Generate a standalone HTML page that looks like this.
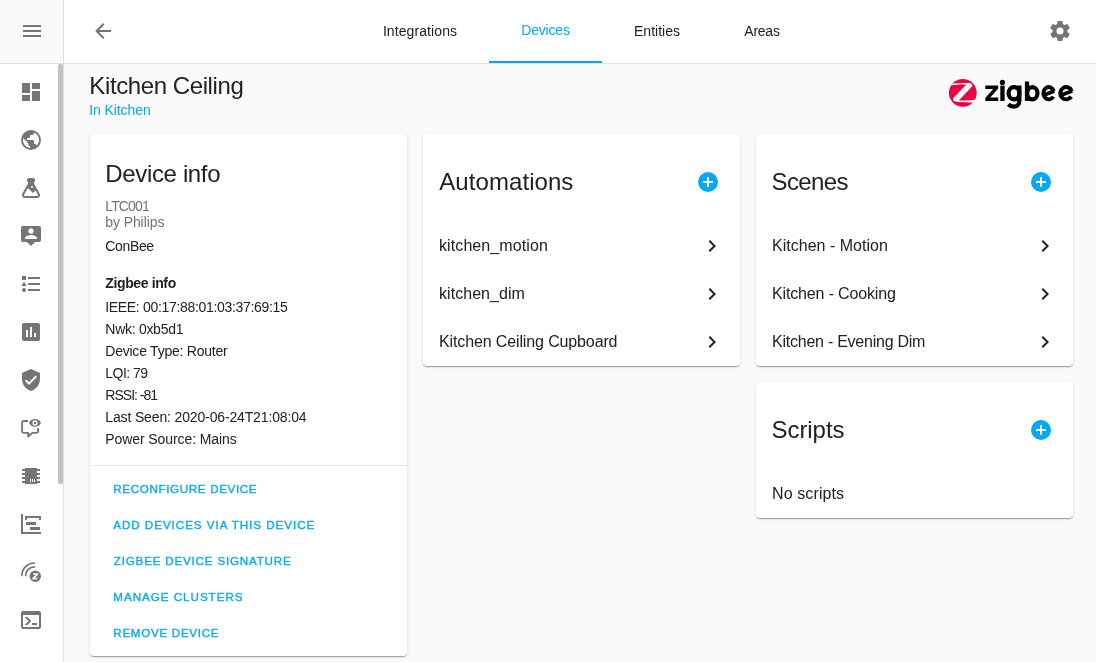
<!DOCTYPE html>
<html>
<head>
<meta charset="utf-8">
<style>
html,body{margin:0;padding:0;}
body{width:1096px;height:662px;overflow:hidden;background:#fafafa;font-family:"Liberation Sans",sans-serif;color:#212121;position:relative;}
.abs{position:absolute;}
#sidebar{left:0;top:0;width:63px;height:662px;background:#fff;border-right:1px solid #e0e0e0;}
#menu{left:0;top:0;width:63px;height:63px;background:#fafafa;border-bottom:1px solid #e0e0e0;}
#scroll{left:58px;top:64px;width:5px;height:420px;background:#c1c1c1;border-radius:2px;}
#header{left:64px;top:0;width:1032px;height:63px;background:#fff;border-bottom:1px solid #e0e0e0;}
svg.ic{position:absolute;width:24px;height:24px;fill:#757575;}
.tab{will-change:transform;position:absolute;top:0;height:64px;line-height:63px;font-size:14px;color:#212121;text-align:center;white-space:nowrap;}
.tab.act{color:#03a9f4;}
#ink{left:489px;top:61px;width:113px;height:2px;background:#03a9f4;}
.card{position:absolute;background:#fff;border-radius:4px;box-shadow:0 2px 1px -1px rgba(0,0,0,.2),0 1px 1px 0 rgba(0,0,0,.14),0 1px 3px 0 rgba(0,0,0,.12);}
.t{position:absolute;white-space:nowrap;line-height:1;}
.h1{font-size:24px;color:#212121;}
.row{font-size:16px;color:#212121;}
.info{font-size:14px;color:#212121;}
.sec{font-size:14px;color:#727272;}
.btn{font-size:11.6px;color:#03a9f4;font-weight:normal;-webkit-text-stroke:0.35px #03a9f4;}
svg.chev{position:absolute;width:24px;height:24px;fill:#212121;}
svg.plus{position:absolute;width:24px;height:24px;fill:#03a9f4;}
</style>
</head>
<body>
<div id="sidebar" class="abs"></div>
<div id="menu" class="abs"></div>
<div id="scroll" class="abs"></div>
<div id="header" class="abs"></div>

<!-- sidebar icons -->
<svg class="ic" style="left:20px;top:19px" viewBox="0 0 24 24"><path d="M3,6H21V8H3V6M3,11H21V13H3V11M3,16H21V18H3V16Z"/></svg>
<svg class="ic" style="left:19px;top:80px" viewBox="0 0 24 24"><path d="M13,3V9H21V3M13,21H21V11H13M3,21H11V15H3M3,13H11V3H3V13Z"/></svg>
<svg class="ic" style="left:19px;top:128px" viewBox="0 0 24 24"><path d="M17.9,17.39C17.64,16.59 16.89,16 16,16H15V13A1,1 0 0,0 14,12H8V10H10A1,1 0 0,0 11,9V7H13A2,2 0 0,0 15,5V4.59C17.93,5.77 20,8.64 20,12C20,14.08 19.2,15.97 17.9,17.39M11,19.93C7.05,19.44 4,16.08 4,12C4,11.38 4.08,10.78 4.21,10.21L9,15V16A2,2 0 0,0 11,18M12,2A10,10 0 0,0 2,12A10,10 0 0,0 12,22A10,10 0 0,0 22,12A10,10 0 0,0 12,2Z"/></svg>
<svg class="ic" style="left:19px;top:176px" viewBox="0 0 24 24"><path d="M6,22A3,3 0 0,1 3,19C3,18.400 3.180,17.840 3.500,17.370L9,7.810V6A1,1 0 0,1 8,5V4A2,2 0 0,1 10,2H14A2,2 0 0,1 16,4V5A1,1 0 0,1 15,6V7.810L20.500,17.370C20.820,17.840 21,18.400 21,19A3,3 0 0,1 18,22H6M5,19A1,1 0 0,0 6,20H18A1,1 0 0,0 19,19C19,18.790 18.930,18.590 18.820,18.430L16.530,14.470L14,17L8.930,11.930L5.180,18.430C5.070,18.590 5,18.790 5,19M13,10A1,1 0 0,0 12,11A1,1 0 0,0 13,12A1,1 0 0,0 14,11A1,1 0 0,0 13,10Z"/></svg>
<svg class="ic" style="left:19px;top:224px" viewBox="0 0 24 24"><path d="M20,2H4A2,2 0 0,0 2,4V16A2,2 0 0,0 4,18H8L12,22L16,18H20A2,2 0 0,0 22,16V4A2,2 0 0,0 20,2M12,4.300C13.500,4.300 14.700,5.500 14.700,7C14.700,8.500 13.500,9.700 12,9.700C10.500,9.700 9.300,8.500 9.300,7C9.300,5.500 10.500,4.300 12,4.300M18,15H6V14.100C6,12.100 10,11 12,11C14,11 18,12.100 18,14.100V15Z"/></svg>
<svg class="ic" style="left:19px;top:272px" viewBox="0 0 24 24"><path d="M5,9.500L7.500,14H2.500L5,9.500M3,4H7V8H3V4M5,20A2,2 0 0,0 7,18A2,2 0 0,0 5,16A2,2 0 0,0 3,18A2,2 0 0,0 5,20M9,5V7H21V5H9M9,19H21V17H9V19M9,13H21V11H9V13Z"/></svg>
<svg class="ic" style="left:19px;top:320px" viewBox="0 0 24 24"><path d="M17,17H15V13H17M13,17H11V7H13M9,17H7V10H9M19,3H5C3.890,3 3,3.890 3,5V19A2,2 0 0,0 5,21H19A2,2 0 0,0 21,19V5C21,3.890 20.100,3 19,3Z"/></svg>
<svg class="ic" style="left:19px;top:368px" viewBox="0 0 24 24"><path d="M10,17L6,13L7.410,11.590L10,14.170L16.590,7.580L18,9M12,1L3,5V11C3,16.550 6.840,21.740 12,23C17.160,21.740 21,16.550 21,11V5L12,1Z"/></svg>
<svg class="ic" style="left:19px;top:416px" viewBox="0 0 24 24"><path fill="none" stroke="#757575" stroke-width="1.900" stroke-linejoin="round" d="M9,5H4.600A1.500,1.500 0 0,0 3.100,6.500V15.350A1.500,1.500 0 0,0 4.600,16.850H9.250V20.600L13.300,16.850H17.550A1.500,1.500 0 0,0 19.050,15.350V12.300"/><path d="M16,3C13.270,3 10.940,4.620 10,6.900C10.940,9.180 13.270,10.800 16,10.800C18.730,10.800 21.060,9.180 22,6.900C21.060,4.620 18.730,3 16,3Z"/><circle cx="16" cy="6.900" r="2.550" fill="#fff"/><circle cx="16" cy="6.900" r="1.250"/></svg>
<svg class="ic" style="left:19px;top:464px" viewBox="0 0 24 24"><path fill-rule="evenodd" d="M6,4H18V5H21V7H18V9H21V11H18V13H21V15H18V17H21V19H18V20H6V19H3V17H6V15H3V13H6V11H3V9H6V7H3V5H6V4M11,15V18H12V15H11M13,15V18H14V15H13M15,15V18H16V15H15Z"/></svg>
<svg class="ic" style="left:19px;top:512px" viewBox="0 0 24 24"><path d="M2,2H4V20H22V22H2V2M6,4H22V8H20V6H8V8H6V4M7,10H17V13H7V10M11,15H21V18H11V15Z"/></svg>
<svg class="ic" style="left:19px;top:560px" viewBox="0 0 24 24"><path fill="none" stroke="#757575" stroke-width="1.700" stroke-linecap="round" d="M2.900,15.500A12.500,12.500 0 0,1 15.400,3M6.700,15.500A8.700,8.700 0 0,1 15.400,6.800"/><circle cx="16.300" cy="16.300" r="5.700"/><path fill="#fff" d="M14.400,13.200H19.400L19.100,14.800L15.900,17.800H18.500L18.200,19.400H13.200L13.500,17.800L16.700,14.800H14.100Z"/></svg>
<svg class="ic" style="left:19px;top:608px" viewBox="0 0 24 24"><path d="M20,19V7H4V19H20M20,3A2,2 0 0,1 22,5V19A2,2 0 0,1 20,21H4A2,2 0 0,1 2,19V5C2,3.890 2.900,3 4,3H20M13,17V15H18V17H13M9.580,13L5.570,9H8.400L11.700,12.300C12.090,12.690 12.090,13.330 11.700,13.720L8.420,17H5.590L9.580,13Z"/></svg>

<!-- header -->
<svg class="ic" style="left:91px;top:19px" viewBox="0 0 24 24"><path d="M20,11V13H8L13.500,18.500L12.080,19.920L4.160,12L12.080,4.080L13.500,5.500L8,11H20Z"/></svg>
<div class="tab" style="left:364px;width:112px;letter-spacing:0.09px;">Integrations</div>
<div class="tab act" style="left:489px;width:113px;line-height:61px;letter-spacing:-0.2px;">Devices</div>
<div class="tab" style="left:614px;width:86px;">Entities</div>
<div class="tab" style="left:720px;width:84px;letter-spacing:-0.25px;">Areas</div>
<div id="ink" class="abs"></div>
<svg class="ic" style="left:1048px;top:19px" viewBox="0 0 24 24"><path d="M12,15.500A3.500,3.500 0 0,1 8.500,12A3.500,3.500 0 0,1 12,8.500A3.500,3.500 0 0,1 15.500,12A3.500,3.500 0 0,1 12,15.500M19.430,12.970C19.470,12.650 19.500,12.330 19.500,12C19.500,11.670 19.470,11.340 19.430,11L21.540,9.370C21.730,9.220 21.780,8.950 21.660,8.730L19.660,5.270C19.540,5.050 19.270,4.960 19.050,5.050L16.560,6.050C16.040,5.660 15.500,5.320 14.870,5.070L14.500,2.420C14.460,2.180 14.250,2 14,2H10C9.750,2 9.540,2.180 9.500,2.420L9.130,5.070C8.500,5.320 7.960,5.660 7.440,6.050L4.950,5.050C4.730,4.960 4.460,5.050 4.340,5.270L2.340,8.730C2.210,8.950 2.270,9.220 2.460,9.370L4.570,11C4.530,11.340 4.500,11.670 4.500,12C4.500,12.330 4.530,12.650 4.570,12.970L2.460,14.630C2.270,14.780 2.210,15.050 2.340,15.270L4.340,18.730C4.460,18.950 4.730,19.030 4.950,18.950L7.440,17.940C7.960,18.340 8.500,18.680 9.130,18.930L9.500,21.580C9.540,21.820 9.750,22 10,22H14C14.250,22 14.460,21.820 14.500,21.580L14.870,18.930C15.500,18.670 16.040,18.340 16.560,17.940L19.050,18.950C19.270,19.030 19.540,18.950 19.660,18.730L21.660,15.270C21.780,15.050 21.730,14.780 21.540,14.630L19.430,12.970Z"/></svg>

<!-- title -->

<!-- zigbee logo -->
<svg class="abs" style="left:944px;top:74px;width:140px;height:40px;" viewBox="0 0 140 40"><circle cx="18.800" cy="18.800" r="13.900" fill="#eb0443"/><path fill="#fafafa" d="M8.800,9.400C14,9 20,8.800 24.500,9C27.500,9.100 29.200,11 27.800,12.700L14.800,26.400C20,26.600 26,26.500 31.800,25.800L29.300,28.400C23,28.500 16,28.400 11.500,27.600C8.800,27.100 8.200,25.300 9.600,23.800L22.300,10.400C17,10.300 11,10.600 6.300,11.200Z"/>
<g transform="translate(36,0)" fill="#000" stroke="none"><path d="M5.300,11.600H18.200V14.600L10.300,23.500H18.200V26.900H5.300V23.900L13.200,15.050H5.300Z"/><rect x="20.300" y="11.600" width="4.300" height="15.300"/><circle cx="22.450" cy="8.400" r="2.600"/><rect x="44.900" y="7.500" width="4.200" height="19.400"/>
<g fill="none" stroke="#000" stroke-width="4.200"><ellipse cx="34" cy="19.250" rx="5.400" ry="6.050"/><path d="M39.400,11.600V26.500C39.400,30.500 37,32.600 33.800,32.600C31.500,32.600 29.700,31.800 28.300,30.300"/><ellipse cx="52.300" cy="19.250" rx="5.200" ry="6.050"/>
<path stroke-width="3.9" d="M73.82,17.15A5.4,6.15 0 1,0 73.28,22.60M63.65,21.25L74.22,17.00"/><path stroke-width="3.9" d="M91.79,17.15A5.95,6.15 0 1,0 91.19,22.60M80.55,21.25L92.19,17.00"/></g></g></svg>

<!-- card 1 -->
<div class="card" style="left:90px;top:134px;width:317px;height:522px;"></div>
<div class="abs" style="left:90px;top:465px;width:317px;height:1px;background:#e8e8e8;"></div>

<!-- card 2 -->
<div class="card" style="left:423px;top:134px;width:317px;height:232px;"></div>
<svg class="plus" style="left:696px;top:170px" viewBox="0 0 24 24"><path d="M17,13H13V17H11V13H7V11H11V7H13V11H17M12,2A10,10 0 0,0 2,12A10,10 0 0,0 12,22A10,10 0 0,0 22,12A10,10 0 0,0 12,2Z"/></svg>
<svg class="chev" style="left:700px;top:234px" viewBox="0 0 24 24"><path d="M8.590,16.580L13.170,12L8.590,7.410L10,6L16,12L10,18L8.590,16.580Z"/></svg>
<svg class="chev" style="left:700px;top:282px" viewBox="0 0 24 24"><path d="M8.590,16.580L13.170,12L8.590,7.410L10,6L16,12L10,18L8.590,16.580Z"/></svg>
<svg class="chev" style="left:700px;top:330px" viewBox="0 0 24 24"><path d="M8.590,16.580L13.170,12L8.590,7.410L10,6L16,12L10,18L8.590,16.580Z"/></svg>

<!-- card 3 -->
<div class="card" style="left:756px;top:134px;width:317px;height:232px;"></div>
<svg class="plus" style="left:1029px;top:170px" viewBox="0 0 24 24"><path d="M17,13H13V17H11V13H7V11H11V7H13V11H17M12,2A10,10 0 0,0 2,12A10,10 0 0,0 12,22A10,10 0 0,0 22,12A10,10 0 0,0 12,2Z"/></svg>
<svg class="chev" style="left:1033px;top:234px" viewBox="0 0 24 24"><path d="M8.590,16.580L13.170,12L8.590,7.410L10,6L16,12L10,18L8.590,16.580Z"/></svg>
<svg class="chev" style="left:1033px;top:282px" viewBox="0 0 24 24"><path d="M8.590,16.580L13.170,12L8.590,7.410L10,6L16,12L10,18L8.590,16.580Z"/></svg>
<svg class="chev" style="left:1033px;top:330px" viewBox="0 0 24 24"><path d="M8.590,16.580L13.170,12L8.590,7.410L10,6L16,12L10,18L8.590,16.580Z"/></svg>

<!-- card 4 -->
<div class="card" style="left:756px;top:382px;width:317px;height:136px;"></div>
<svg class="plus" style="left:1029px;top:418px" viewBox="0 0 24 24"><path d="M17,13H13V17H11V13H7V11H11V7H13V11H17M12,2A10,10 0 0,0 2,12A10,10 0 0,0 12,22A10,10 0 0,0 22,12A10,10 0 0,0 12,2Z"/></svg>
<!-- text -->
<div id="txt" style="position:absolute;left:0;top:0;width:1096px;height:662px;will-change:transform;">
<div class="t " style="left:89.36px;top:74px;font-size:24px;letter-spacing:-0.406px;">Kitchen Ceiling</div>
<div class="t " style="left:89.16px;top:103px;font-size:14px;color:#03a9f4;letter-spacing:-0.081px;">In Kitchen</div>
<div class="t h1" style="left:105.36px;top:162px;letter-spacing:-0.357px;">Device info</div>
<div class="t sec" style="left:105.3px;top:199px;letter-spacing:-0.867px;">LTC001</div>
<div class="t sec" style="left:105.26px;top:215px;letter-spacing:-0.085px;">by Philips</div>
<div class="t info" style="left:105.3px;top:239px;letter-spacing:-0.358px;">ConBee</div>
<div class="t info" style="left:105.3px;top:276px;font-weight:bold;letter-spacing:-0.376px;">Zigbee info</div>
<div class="t info" style="left:105.16px;top:300px;letter-spacing:-0.314px;">IEEE: 00:17:88:01:03:37:69:15</div>
<div class="t info" style="left:105.3px;top:322px;letter-spacing:-0.28px;">Nwk: 0xb5d1</div>
<div class="t info" style="left:105.3px;top:344px;letter-spacing:-0.235px;">Device Type: Router</div>
<div class="t info" style="left:105.3px;top:366px;letter-spacing:-0.547px;">LQI: 79</div>
<div class="t info" style="left:105.3px;top:388px;letter-spacing:-0.981px;">RSSI: -81</div>
<div class="t info" style="left:105.3px;top:410px;letter-spacing:-0.144px;">Last Seen: 2020-06-24T21:08:04</div>
<div class="t info" style="left:105.3px;top:432px;letter-spacing:-0.087px;">Power Source: Mains</div>
<div class="t btn" style="left:113.34px;top:483px;letter-spacing:0.66px;">RECONFIGURE DEVICE</div>
<div class="t btn" style="left:113.21px;top:519px;letter-spacing:0.978px;">ADD DEVICES VIA THIS DEVICE</div>
<div class="t btn" style="left:113.8px;top:555px;letter-spacing:0.819px;">ZIGBEE DEVICE SIGNATURE</div>
<div class="t btn" style="left:113.34px;top:591px;letter-spacing:0.99px;">MANAGE CLUSTERS</div>
<div class="t btn" style="left:113.34px;top:627px;letter-spacing:0.718px;">REMOVE DEVICE</div>
<div class="t h1" style="left:439.31px;top:170px;letter-spacing:0.065px;">Automations</div>
<div class="t row" style="left:439.0px;top:238px;letter-spacing:0.094px;">kitchen_motion</div>
<div class="t row" style="left:439.0px;top:286px;letter-spacing:0.047px;">kitchen_dim</div>
<div class="t row" style="left:439.06px;top:334px;letter-spacing:-0.13px;">Kitchen Ceiling Cupboard</div>
<div class="t h1" style="left:771.57px;top:170px;letter-spacing:-0.64px;">Scenes</div>
<div class="t row" style="left:772.06px;top:238px;letter-spacing:0.008px;">Kitchen - Motion</div>
<div class="t row" style="left:772.06px;top:286px;letter-spacing:-0.152px;">Kitchen - Cooking</div>
<div class="t row" style="left:772.06px;top:334px;letter-spacing:-0.245px;">Kitchen - Evening Dim</div>
<div class="t h1" style="left:771.57px;top:418px;letter-spacing:-0.072px;">Scripts</div>
<div class="t row" style="left:772.06px;top:486px;letter-spacing:0.103px;">No scripts</div>
</div>
</body>
</html>
